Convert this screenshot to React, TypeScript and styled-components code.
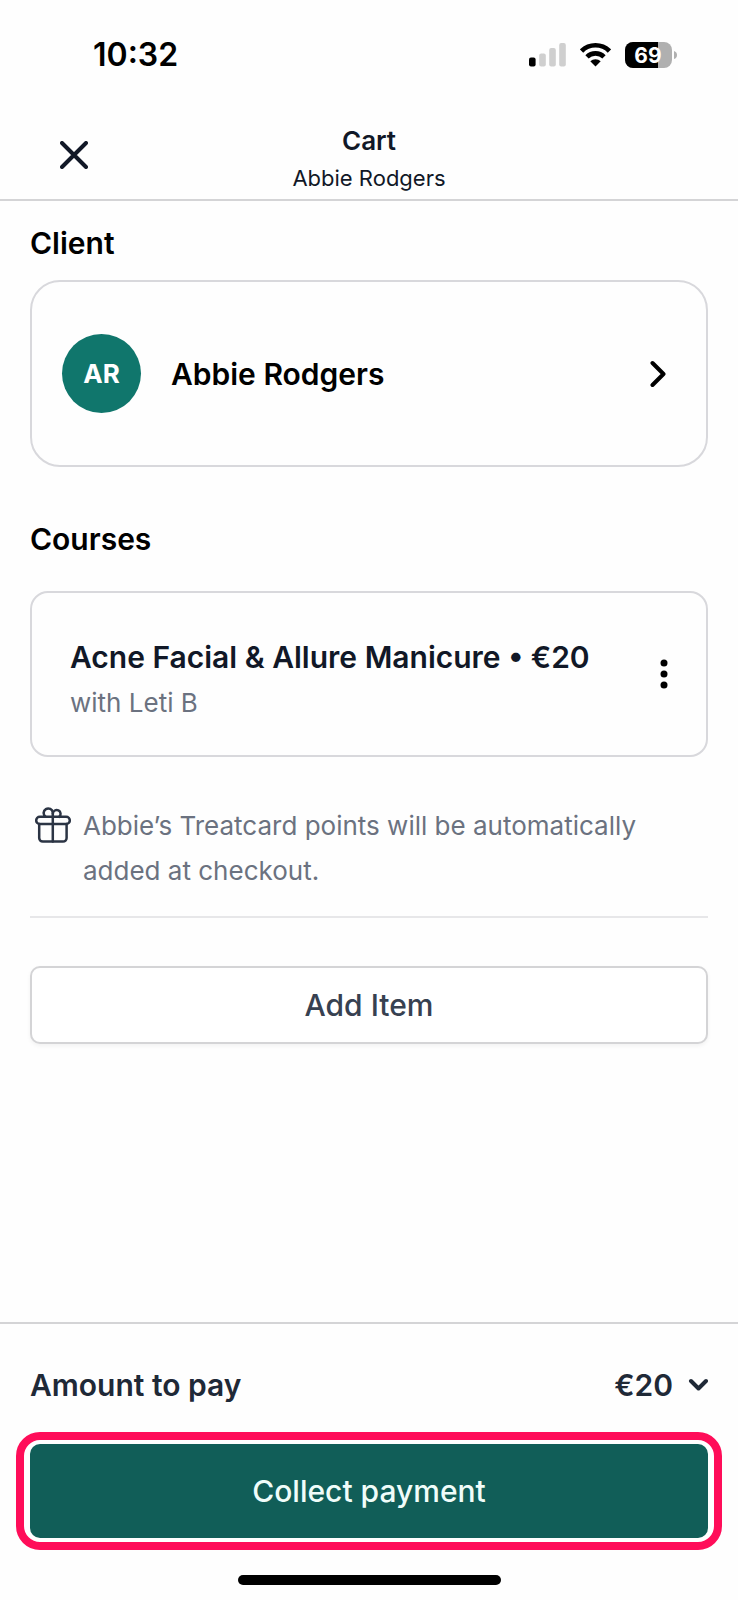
import React from "react";
import styled, { createGlobalStyle } from "styled-components";

const GlobalStyle = createGlobalStyle`
  *, *::before, *::after { box-sizing: border-box; }
  body {
    margin: 0;
    background: #fefefe;
    color: #000;
    font-family: Inter, "Liberation Sans", sans-serif;
  }
  h1, h2, h3, p { margin: 0; }
  button {
    margin: 0;
    padding: 0;
    border: 0;
    background: none;
    color: inherit;
    font: inherit;
    cursor: pointer;
  }
  svg { display: block; flex: none; }
`;

const Screen = styled.div`
  display: flex;
  flex-direction: column;
  min-height: 100vh;
`;

const StatusBar = styled.div`
  display: flex;
  align-items: center;
  justify-content: space-between;
  padding: 35px 61px 48px 93px;
`;

const Time = styled.time`
  font-size: 32px;
  font-weight: 600;
  line-height: 40px;
`;

const StatusIcons = styled.div`
  display: flex;
  align-items: center;
  gap: 14px;
`;

const Header = styled.header`
  display: grid;
  grid-template-columns: 1fr auto 1fr;
  align-items: start;
  padding: 0 42px 2px;
  border-bottom: 2px solid #d4d4d6;
`;

const IconButton = styled.button<{ $size: number; $color?: string }>`
  display: flex;
  align-items: center;
  justify-content: center;
  width: ${(p) => p.$size}px;
  height: ${(p) => p.$size}px;
  color: ${(p) => p.$color ?? "#000"};
`;

const HeaderText = styled.div`
  text-align: center;
  color: #111827;
`;

const PageTitle = styled.h1`
  font-size: 26px;
  font-weight: 600;
  line-height: 36px;
`;

const PageSubtitle = styled.p`
  font-size: 22px;
  line-height: 38px;
`;

const Content = styled.main`
  flex: 1;
  padding: 22px 30px 40px;
`;

const Section = styled.section<{ $gap: number }>`
  display: flex;
  flex-direction: column;
  gap: ${(p) => p.$gap}px;
  & + & { margin-top: 52px; }
`;

const SectionTitle = styled.h2`
  font-size: 30px;
  font-weight: 600;
  line-height: 40px;
`;

const ClientCard = styled.button`
  display: flex;
  align-items: center;
  gap: 30px;
  padding: 52px 40px 52px 30px;
  border: 2px solid #d8d8dc;
  border-radius: 30px;
  text-align: left;
`;

const Avatar = styled.span`
  display: grid;
  place-items: center;
  width: 79px;
  height: 79px;
  border-radius: 50%;
  background: #10766c;
  color: #fff;
  font-size: 26px;
  font-weight: 700;
`;

const ClientName = styled.span`
  flex: 1;
  font-size: 30px;
  font-weight: 600;
  line-height: 40px;
`;

const CourseCard = styled.article`
  display: flex;
  align-items: center;
  padding: 30px 20px 30px 38px;
  border: 2px solid #d8d8dc;
  border-radius: 18px;
`;

const CourseBody = styled.div`
  flex: 1;
  padding-top: 12px;
  line-height: 45px;
`;

const CourseTitle = styled.h3`
  color: #111827;
  font-size: 30px;
  font-weight: 600;
`;

const CourseStaff = styled.p`
  color: #6b7280;
  font-size: 26px;
`;

const Note = styled.p`
  display: flex;
  gap: 12px;
  margin-top: 46px;
  padding: 0 40px 23px 5px;
  color: #6b7280;
  font-size: 26px;
  line-height: 45px;
  svg { margin-top: 4px; color: #2b3444; }
`;

const Divider = styled.hr`
  margin: 0 0 48px;
  border: 0;
  border-top: 2px solid #e7e7e9;
`;

const AddButton = styled.button`
  width: 100%;
  padding: 17px;
  border: 2px solid #d4d4d6;
  border-radius: 10px;
  background: #fff;
  box-shadow: 0 2px 4px rgba(0, 0, 0, 0.05);
  color: #374151;
  font-size: 30px;
  font-weight: 500;
  line-height: 40px;
`;

const Footer = styled.footer`
  padding: 41px 16px 15px;
  border-top: 2px solid #d4d4d6;
`;

const AmountRow = styled.div`
  display: flex;
  justify-content: space-between;
  padding: 0 14px 27px;
  color: #1f2937;
  font-size: 30px;
  font-weight: 600;
  line-height: 40px;
`;

const AmountToggle = styled.button`
  display: flex;
  align-items: center;
  gap: 15px;
`;

const Highlight = styled.div`
  padding: 4px 6px;
  border: 8px solid #ff0d59;
  border-radius: 24px;
  background: #fff;
`;

const PayButton = styled.button`
  display: block;
  width: 100%;
  padding: 27px;
  border-radius: 10px;
  background: #115e58;
  color: #f0fdfa;
  font-size: 30px;
  font-weight: 500;
  line-height: 40px;
`;

const HomeIndicator = styled.div`
  width: 263px;
  height: 10px;
  margin: 25px auto 0;
  border-radius: 5px;
  background: #000;
`;

const stroke = {
  fill: "none",
  stroke: "currentColor",
  strokeLinecap: "round" as const,
  strokeLinejoin: "round" as const,
};

const SignalIcon = () => (
  <svg width="37" height="26" viewBox="0 0 37 26" role="img" aria-label="Signal: one bar">
    <rect x="0" y="15.5" width="6.6" height="9" rx="2" fill="#000" />
    <g fill="#cfcfcf">
      <rect x="10.2" y="11.5" width="6.6" height="13" rx="2" />
      <rect x="20.2" y="6" width="6.6" height="18.5" rx="2" />
      <rect x="30.2" y="1" width="6.6" height="23.5" rx="2" />
    </g>
  </svg>
);

const WifiIcon = () => (
  <svg width="31" height="26" viewBox="0 0 31 26" role="img" aria-label="Wi-Fi">
    <g fill="none" stroke="#000" strokeWidth="4.6">
      <path d="M1.6 9a19.8 19.8 0 0 1 27.8 0" />
      <path d="M7 14.9a12 12 0 0 1 17 0" />
    </g>
    <path d="M15.5 24.5l-5.2-5.2a7.4 7.4 0 0 1 10.4 0z" fill="#000" />
  </svg>
);

const BatteryIcon = () => (
  <svg width="52" height="26" viewBox="0 0 52 26" role="img" aria-label="Battery 69%">
    <clipPath id="battery-shell">
      <rect width="47" height="26" rx="8" />
    </clipPath>
    <g clipPath="url(#battery-shell)">
      <rect width="47" height="26" fill="#b0b0b0" />
      <rect width="33" height="26" fill="#000" />
    </g>
    <path d="M49 9q3 1 3 4t-3 4z" fill="#b0b0b0" />
    <text x="23" y="20.5" textAnchor="middle" fontSize="21" fontWeight="700" fill="#fff">
      69
    </text>
  </svg>
);

const CloseIcon = () => (
  <svg width="28" height="28" viewBox="0 0 28 28" {...stroke} strokeWidth="4">
    <path d="M2 2l24 24M26 2L2 26" />
  </svg>
);

const ChevronRightIcon = () => (
  <svg width="16" height="28" viewBox="0 0 16 28" {...stroke} strokeWidth="4">
    <path d="M2.5 3l11 11l-11 11" />
  </svg>
);

const ChevronDownIcon = () => (
  <svg width="20" height="20" viewBox="0 0 20 20" {...stroke} strokeWidth="4">
    <path d="M3 6l7.5 7.5L18 6" />
  </svg>
);

const MoreIcon = () => (
  <svg width="8" height="30" viewBox="0 0 8 30" fill="currentColor">
    <circle cx="4" cy="4" r="3.5" />
    <circle cx="4" cy="15" r="3.5" />
    <circle cx="4" cy="26" r="3.5" />
  </svg>
);

const GiftIcon = () => (
  <svg width="36" height="36" viewBox="0 0 36 36" {...stroke} strokeWidth="2.5" aria-hidden="true">
    <rect x="1.2" y="9.8" width="33.6" height="7.2" rx="3.6" />
    <path d="M4.2 17v14a3.6 3.6 0 0 0 3.6 3.6h20.2a3.6 3.6 0 0 0 3.6-3.6V17" />
    <path d="M17.8 9.8V34.6" />
    <path d="M17.8 9.8V5.5a4.6 4.6 0 1 0-7.2 4.3" />
    <path d="M17.8 6.5a3.9 3.9 0 1 1 6.5 3.3" />
  </svg>
);

export default function App() {
  return (
    <>
      <GlobalStyle />
      <Screen>
        <StatusBar>
          <Time>10:32</Time>
          <StatusIcons>
            <SignalIcon />
            <WifiIcon />
            <BatteryIcon />
          </StatusIcons>
        </StatusBar>

        <Header>
          <IconButton $size={64} $color="#111827" aria-label="Close">
            <CloseIcon />
          </IconButton>
          <HeaderText>
            <PageTitle>Cart</PageTitle>
            <PageSubtitle>Abbie Rodgers</PageSubtitle>
          </HeaderText>
        </Header>

        <Content>
          <Section $gap={17}>
            <SectionTitle>Client</SectionTitle>
            <ClientCard>
              <Avatar>AR</Avatar>
              <ClientName>Abbie Rodgers</ClientName>
              <ChevronRightIcon />
            </ClientCard>
          </Section>

          <Section $gap={32}>
            <SectionTitle>Courses</SectionTitle>
            <CourseCard>
              <CourseBody>
                <CourseTitle>Acne Facial &amp; Allure Manicure • €20</CourseTitle>
                <CourseStaff>with Leti B</CourseStaff>
              </CourseBody>
              <IconButton $size={44} aria-label="Course options">
                <MoreIcon />
              </IconButton>
            </CourseCard>
          </Section>

          <Note>
            <GiftIcon />
            <span>Abbie’s Treatcard points will be automatically added at checkout.</span>
          </Note>
          <Divider />
          <AddButton>Add Item</AddButton>
        </Content>

        <Footer>
          <AmountRow>
            <span>Amount to pay</span>
            <AmountToggle aria-label="€20, show breakdown">
              €20
              <ChevronDownIcon />
            </AmountToggle>
          </AmountRow>
          <Highlight>
            <PayButton>Collect payment</PayButton>
          </Highlight>
          <HomeIndicator />
        </Footer>
      </Screen>
    </>
  );
}
